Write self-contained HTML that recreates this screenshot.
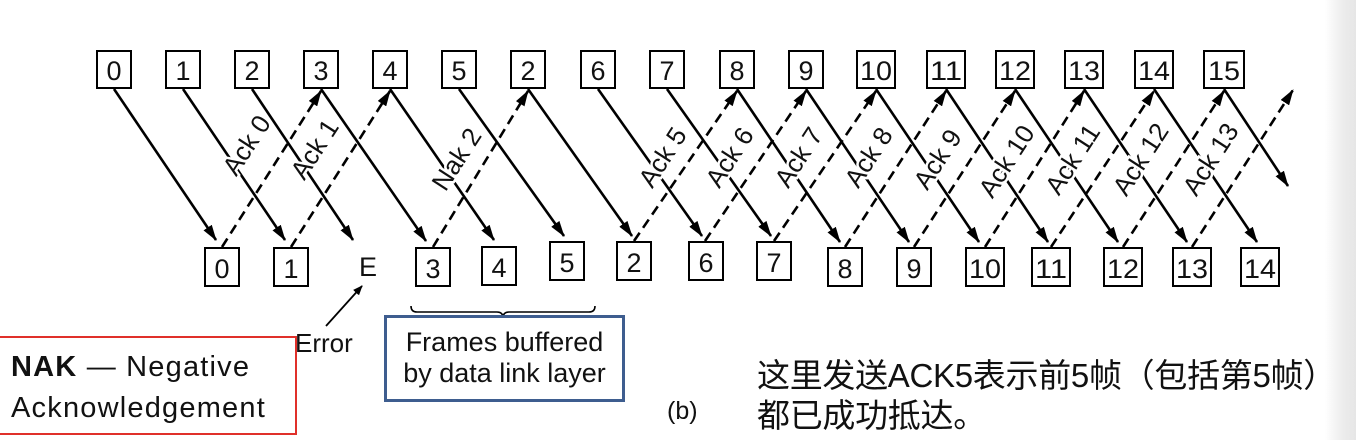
<!DOCTYPE html>
<html><head><meta charset="utf-8"><style>
html,body{margin:0;padding:0;background:#fff;width:1356px;height:440px;overflow:hidden;position:relative}
#g{position:absolute;left:1325px;top:0;width:31px;height:440px;background:linear-gradient(to right,#fff,#ececec 60%,#e6e6e6)}
svg{position:absolute;left:0;top:0}
.red{position:absolute;left:-2px;top:336px;width:299px;height:99px;border:2px solid #e0302a;font-family:"Liberation Sans",sans-serif;font-size:29px;line-height:41px;padding-left:11px;box-sizing:border-box;padding-top:9px;color:#111;white-space:nowrap;letter-spacing:1.2px}
.blue{position:absolute;left:384px;top:315px;width:241px;height:87px;border:3px solid #3e5d8f;box-sizing:border-box;font-family:"Liberation Sans",sans-serif;font-size:27px;line-height:31px;text-align:center;padding-top:9px;color:#111;white-space:nowrap}
.cn{position:absolute;left:757px;top:356px;font-family:"Liberation Sans","Noto Sans CJK SC",sans-serif;font-size:33px;line-height:40px;color:#111;white-space:nowrap;letter-spacing:-0.3px}
</style></head><body>
<div id="g"></div>
<svg width="1356" height="440" viewBox="0 0 1356 440" font-family="Liberation Sans, sans-serif">
<defs><marker id="a" markerWidth="10" markerHeight="8" refX="9" refY="4" orient="auto" markerUnits="userSpaceOnUse"><path d="M0,0 L10,4 L0,8 Z" fill="#000"/></marker>
<marker id="b" markerWidth="16" markerHeight="10" refX="15" refY="5" orient="auto" markerUnits="userSpaceOnUse"><path d="M0,0 L16,5 L0,10 Z" fill="#000"/></marker></defs>
<g fill="none" stroke="#000" stroke-width="2">
<rect x="97" y="51" width="34" height="37"/><rect x="166" y="51" width="34" height="37"/><rect x="235" y="51" width="34" height="37"/><rect x="304" y="51" width="34" height="37"/><rect x="373" y="51" width="34" height="37"/><rect x="442" y="51" width="34" height="37"/><rect x="511" y="51" width="34" height="37"/><rect x="581" y="51" width="34" height="37"/><rect x="650" y="51" width="34" height="37"/><rect x="720" y="51" width="34" height="37"/><rect x="789" y="51" width="34" height="37"/><rect x="857" y="51" width="38" height="37"/><rect x="927" y="51" width="38" height="37"/><rect x="996" y="51" width="38" height="37"/><rect x="1065" y="51" width="38" height="37"/><rect x="1135" y="51" width="38" height="37"/><rect x="1204" y="51" width="40" height="37"/>
<rect x="205" y="248" width="34" height="38"/><rect x="274" y="248" width="34" height="38"/><rect x="416" y="248" width="34" height="38"/><rect x="482" y="247" width="34" height="38"/><rect x="550" y="242" width="34" height="38"/><rect x="617" y="242" width="34" height="38"/><rect x="689" y="242" width="34" height="38"/><rect x="757" y="242" width="34" height="38"/><rect x="828" y="248" width="34" height="38"/><rect x="897" y="248" width="34" height="38"/><rect x="966" y="248" width="38" height="38"/><rect x="1032" y="248" width="38" height="38"/><rect x="1104" y="248" width="38" height="38"/><rect x="1173" y="248" width="38" height="38"/><rect x="1241" y="248" width="38" height="38"/>
</g>
<g stroke="#000" stroke-width="2.6" marker-end="url(#b)">
<line x1="114" y1="89" x2="216" y2="240"/><line x1="183" y1="89" x2="285" y2="240"/><line x1="252" y1="89" x2="353" y2="240"/><line x1="321" y1="89" x2="426" y2="241"/><line x1="390" y1="89" x2="494" y2="240"/><line x1="459" y1="89" x2="564" y2="236"/><line x1="528" y1="89" x2="632" y2="236"/><line x1="598" y1="89" x2="702" y2="236"/><line x1="667" y1="89" x2="771" y2="236"/><line x1="737" y1="89" x2="840" y2="242"/><line x1="806" y1="89" x2="909" y2="242"/><line x1="876" y1="89" x2="979" y2="242"/><line x1="946" y1="89" x2="1048" y2="242"/><line x1="1015" y1="89" x2="1118" y2="242"/><line x1="1084" y1="89" x2="1187" y2="242"/><line x1="1154" y1="89" x2="1257" y2="242"/><line x1="1224" y1="89" x2="1288" y2="186"/>
</g>
<g stroke="#000" stroke-width="2.6" stroke-dasharray="10,6" marker-end="url(#b)">
<line x1="222" y1="247" x2="321" y2="91"/><line x1="291" y1="247" x2="390" y2="91"/><line x1="433" y1="247" x2="528" y2="91"/><line x1="634" y1="241" x2="737" y2="91"/><line x1="705" y1="241" x2="806" y2="91"/><line x1="774" y1="241" x2="876" y2="91"/><line x1="845" y1="247" x2="946" y2="91"/><line x1="914" y1="247" x2="1015" y2="91"/><line x1="985" y1="247" x2="1084" y2="91"/><line x1="1051" y1="247" x2="1154" y2="91"/><line x1="1123" y1="247" x2="1224" y2="91"/><line x1="1192" y1="247" x2="1293" y2="90"/>
</g>
<g font-size="27" text-anchor="middle" fill="#111">
<text x="114" y="80">0</text><text x="183" y="80">1</text><text x="252" y="80">2</text><text x="321" y="80">3</text><text x="390" y="80">4</text><text x="459" y="80">5</text><text x="528" y="80">2</text><text x="598" y="80">6</text><text x="667" y="80">7</text><text x="737" y="80">8</text><text x="806" y="80">9</text><text x="876" y="80" textLength="32" lengthAdjust="spacingAndGlyphs">10</text><text x="946" y="80" textLength="32" lengthAdjust="spacingAndGlyphs">11</text><text x="1015" y="80" textLength="32" lengthAdjust="spacingAndGlyphs">12</text><text x="1084" y="80" textLength="32" lengthAdjust="spacingAndGlyphs">13</text><text x="1154" y="80" textLength="32" lengthAdjust="spacingAndGlyphs">14</text><text x="1224" y="80" textLength="32" lengthAdjust="spacingAndGlyphs">15</text>
<text x="222" y="278">0</text><text x="291" y="278">1</text><text x="368" y="276">E</text><text x="433" y="278">3</text><text x="499" y="277">4</text><text x="567" y="272">5</text><text x="634" y="272">2</text><text x="706" y="272">6</text><text x="774" y="272">7</text><text x="845" y="278">8</text><text x="914" y="278">9</text><text x="985" y="278" textLength="32" lengthAdjust="spacingAndGlyphs">10</text><text x="1051" y="278" textLength="32" lengthAdjust="spacingAndGlyphs">11</text><text x="1123" y="278" textLength="32" lengthAdjust="spacingAndGlyphs">12</text><text x="1192" y="278" textLength="32" lengthAdjust="spacingAndGlyphs">13</text><text x="1260" y="278" textLength="32" lengthAdjust="spacingAndGlyphs">14</text>
</g>
<g font-size="26" fill="#111" stroke="#fff" stroke-width="5" paint-order="stroke" text-anchor="middle">
<text transform="translate(254,150) rotate(-57)">Ack 0</text>
<text transform="translate(322,154) rotate(-57)">Ack 1</text>
<text transform="translate(464,164) rotate(-57)">Nak 2</text>
<text transform="translate(670,162) rotate(-57)">Ack 5</text>
<text transform="translate(737,162) rotate(-57)">Ack 6</text>
<text transform="translate(806,162) rotate(-57)">Ack 7</text>
<text transform="translate(876,162) rotate(-57)">Ack 8</text>
<text transform="translate(945,164) rotate(-57)">Ack 9</text>
<text transform="translate(1014,166) rotate(-57)">Ack 10</text>
<text transform="translate(1080,164) rotate(-57)">Ack 11</text>
<text transform="translate(1148,164) rotate(-57)">Ack 12</text>
<text transform="translate(1218,164) rotate(-57)">Ack 13</text>
</g>
<line x1="326" y1="326" x2="362" y2="286" stroke="#000" stroke-width="1.8" marker-end="url(#a)"/>
<text x="295" y="352" font-size="26" fill="#111">Error</text>
<path d="M411,306 q0,6 6,6 h80 q6,0 6,6 q0,-6 6,-6 h80 q6,0 6,-6" fill="none" stroke="#000" stroke-width="1.6"/>
<text x="667" y="419" font-size="25" fill="#111">(b)</text>
</svg>
<div class="red"><b>NAK</b> — Negative<br>Acknowledgement</div>
<div class="blue">Frames buffered<br>by data link layer</div>
<div class="cn">这里发送ACK5表示前5帧（包括第5帧）<br>都已成功抵达。</div>
</body></html>
